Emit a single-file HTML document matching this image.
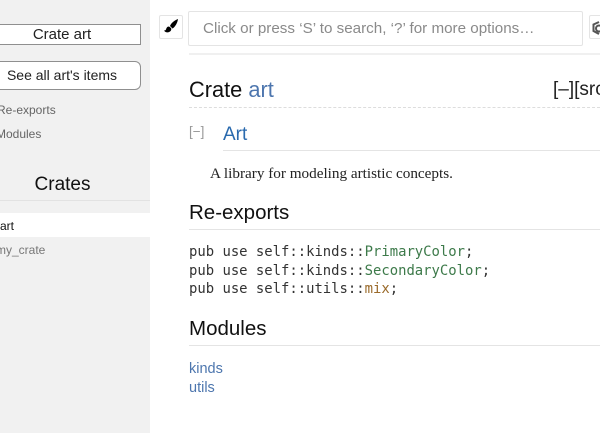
<!DOCTYPE html>
<html><head><meta charset="utf-8">
<style>
html,body{margin:0;padding:0;background:#fff;}
body{width:600px;height:433px;overflow:hidden;position:relative;font-family:"Liberation Sans",sans-serif;color:#000;}
.a{position:absolute;white-space:nowrap;}
</style></head><body>
<div class="a" style="left:0;top:0;width:150px;height:433px;background:#f1f1f1"></div>
<div class="a" style="left:-17px;top:24px;width:156px;height:19px;background:#fff;border:1px solid #8f8f8f;text-align:center;font-size:15px;line-height:20px;color:#222">Crate art</div>
<div class="a" style="left:-17px;top:61px;width:156px;height:27px;background:#fff;border:1px solid #8f8f8f;border-radius:6px;text-align:center;font-size:14px;line-height:27px;color:#222">See all art's items</div>
<div class="a" style="left:-3px;top:103px;font-size:12px;line-height:15px;color:#666">Re-exports</div>
<div class="a" style="left:-4px;top:127px;font-size:12px;line-height:15px;color:#666">Modules</div>
<div class="a" style="left:0;top:175px;width:125px;text-align:center;font-size:19px;line-height:20px;color:#111">Crates</div>
<div class="a" style="left:0;top:200px;width:150px;height:1px;background:#e2e2e2"></div>
<div class="a" style="left:0;top:213px;width:150px;height:24px;background:#fff"></div>
<div class="a" style="left:0;top:219px;font-size:12px;line-height:15px;color:#111">art</div>
<div class="a" style="left:-4px;top:243px;font-size:12px;line-height:15px;color:#777">my_crate</div>

<div class="a" style="left:159px;top:15px;width:22px;height:22px;border:1px solid #e4e4e4;border-radius:2px;background:#fff"></div>
<svg class="a" style="left:162px;top:18px" width="18" height="18" viewBox="0 0 18 18"><path d="M16 1 C13 2 9 5 8 8 L10.500 10.500 C13 9 15.500 5 16 1Z" fill="#000"/><path d="M7 8.500 C5 8.500 4.500 10 4 11.500 C3.500 12.500 2.500 12.500 2 12.500 C3 14.500 6 15 8 13.500 C9.500 12.500 9.500 10.500 9 10Z" fill="#000"/></svg>
<div class="a" style="left:188px;top:11px;width:393px;height:33px;border:1px solid #e4e4e4;border-radius:2px;background:#fff"></div>
<div class="a" style="left:203px;top:20px;font-size:15.200px;line-height:18px;color:#8a8a8a">Click or press ‘S’ to search, ‘?’ for more options…</div>
<div class="a" style="left:589px;top:15px;width:22px;height:22px;border:1px solid #e4e4e4;border-radius:2px;background:#fff"></div>
<svg class="a" style="left:592px;top:20px" width="8" height="17" viewBox="0 0 8 17"><path d="M7 2 L1.500 4.500 V11 L7 14" fill="none" stroke="#555" stroke-width="2"/><circle cx="7" cy="8.500" r="3" fill="none" stroke="#555" stroke-width="2"/></svg>
<div class="a" style="left:189px;top:53px;width:411px;height:2px;background:#f0f0f0"></div>

<div class="a" style="left:189px;top:78px;font-size:21.800px;line-height:24px;color:#111">Crate <span style="color:#4d76ae">art</span></div>
<div class="a" style="left:553px;top:78px;font-size:19px;line-height:24px;color:#222">[–][src]</div>
<div class="a" style="left:189px;top:107px;width:411px;border-top:1px dashed #ddd"></div>
<div class="a" style="left:189px;top:124px;font-size:13.500px;line-height:15px;color:#999">[−]</div>
<div class="a" style="left:223px;top:125px;font-size:19px;line-height:20px;color:#2a6aae">Art</div>
<div class="a" style="left:223px;top:150px;width:377px;height:1px;background:#e4e4e4"></div>
<div class="a" style="left:210px;top:165px;font-family:'Liberation Serif',serif;font-size:15.200px;line-height:18px;color:#222">A library for modeling artistic concepts.</div>

<div class="a" style="left:189px;top:202px;font-size:20.500px;line-height:22px;color:#111">Re-exports</div>
<div class="a" style="left:189px;top:229px;width:411px;height:1px;background:#e4e4e4"></div>
<div class="a" style="left:189px;top:243px;font-family:'DejaVu Sans Mono',monospace;font-size:13.900px;line-height:18.500px;color:#333;white-space:pre">pub use self::kinds::<span style="color:#3d7a4a">PrimaryColor</span>;
pub use self::kinds::<span style="color:#3d7a4a">SecondaryColor</span>;
pub use self::utils::<span style="color:#9a6a2a">mix</span>;</div>

<div class="a" style="left:189px;top:318px;font-size:20.500px;line-height:22px;color:#111">Modules</div>
<div class="a" style="left:189px;top:345px;width:411px;height:1px;background:#e4e4e4"></div>
<div class="a" style="left:189px;top:360px;font-size:14.500px;line-height:19px;color:#4d76ae">kinds<br>utils</div>
</body></html>
